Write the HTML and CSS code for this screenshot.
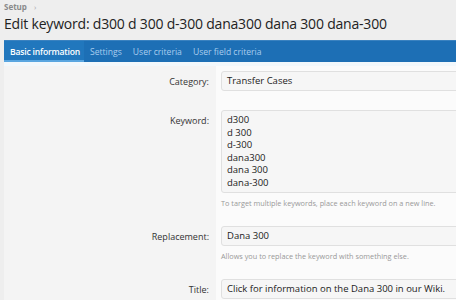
FILE: index.html
```html
<!DOCTYPE html>
<html>
<head>
<meta charset="utf-8">
<link rel="stylesheet" href="styles.css">
</head>
<body>
<div class="page">
  <div class="crumbs"><span class="crumb">Setup</span><span class="sep">›</span></div>
  <h1 class="title">Edit keyword: d300 d 300 d-300 dana300 dana 300 dana-300</h1>
  <div class="block">
    <nav class="tabs">
      <span class="tab active">Basic information</span>
      <span class="tab">Settings</span>
      <span class="tab">User criteria</span>
      <span class="tab">User field criteria</span>
    </nav>
    <div class="strip"></div>
    <div class="form">
      <div class="row">
        <div class="label">Category:</div>
        <div class="field"><div class="input">Transfer Cases</div></div>
      </div>
      <div class="row">
        <div class="label">Keyword:</div>
        <div class="field">
          <div class="textarea">d300<br>d 300<br>d-300<br>dana300<br>dana 300<br>dana-300</div>
          <div class="help">To target multiple keywords, place each keyword on a new line.</div>
        </div>
      </div>
      <div class="row">
        <div class="label">Replacement:</div>
        <div class="field">
          <div class="input">Dana 300</div>
          <div class="help">Allows you to replace the keyword with something else.</div>
        </div>
      </div>
      <div class="row">
        <div class="label">Title:</div>
        <div class="field"><div class="input">Click for information on the Dana 300 in our Wiki.</div></div>
      </div>
    </div>
  </div>
</div>
</body>
</html>
```
FILE: styles.css
```css
html, body {
  margin: 0;
  padding: 0;
  background: #eeeeee;
  overflow: hidden;
}
body {
  font-family: "Open Sans", "Noto Sans", sans-serif;
  color: #222;
}
.page {
  padding: 0 0 0 4px;
}
.crumbs {
  height: 14px;
  display: flex;
  align-items: center;
  gap: 7px;
  padding-bottom: 2px;
  box-sizing: border-box;
  font-size: 8px;
  font-weight: 700;
  color: #8a8a8a;
}
.sep {
  font-weight: 400;
  font-size: 8px;
  color: #aaa;
}
.title {
  margin: 0;
  height: 26px;
  font-size: 14px;
  letter-spacing: -0.2px;
  line-height: 20px;
  font-weight: 400;
  color: #222;
  white-space: nowrap;
}
.block {
  background: #fbfbfb;
}
.tabs {
  display: flex;
  height: 22px;
  background: #1d6fb5;
  border-top: 1px solid #3a82c0;
  box-sizing: border-box;
  font-size: 8.6px;
}
.tab {
  display: flex;
  align-items: center;
  padding: 0 5.5px;
  color: #a9cdee;
}
.tab.active {
  color: #fff;
  font-weight: 600;
  letter-spacing: -0.2px;
  background: #2177bd;
  border-bottom: 2px solid #5aa6e0;
  padding: 2px 4.5px 0 6px;
  box-sizing: border-box;
}
.strip {
  height: 4px;
  background: #f2f8fc;
}
.form {
  display: flex;
  flex-direction: column;
}
.row {
  display: grid;
  grid-template-columns: 212px 1fr;
}
.label {
  background: #f4f4f4;
  text-align: right;
  padding: 10px 7px 0 0;
  font-size: 9px;
  line-height: 12px;
  color: #333;
}
.field {
  padding: 5px 0 14px 5px;
  overflow: hidden;
  min-width: 0;
}
.input, .textarea {
  width: calc(100% + 6px);
  background: #f6f6f6;
  border: 1px solid #e0e0e0;
  border-radius: 3px;
  box-sizing: border-box;
  padding: 0 5px;
  font-size: 9.5px;
  color: #222;
  white-space: nowrap;
  overflow: hidden;
}
.input {
  height: 20px;
  line-height: 18px;
}
.textarea {
  height: 83px;
  padding-top: 3px;
  line-height: 12.6px;
}
.help {
  margin-top: 4px;
  margin-bottom: -2px;
  font-size: 7.3px;
  line-height: 12px;
  color: #999;
  white-space: nowrap;
}
```
